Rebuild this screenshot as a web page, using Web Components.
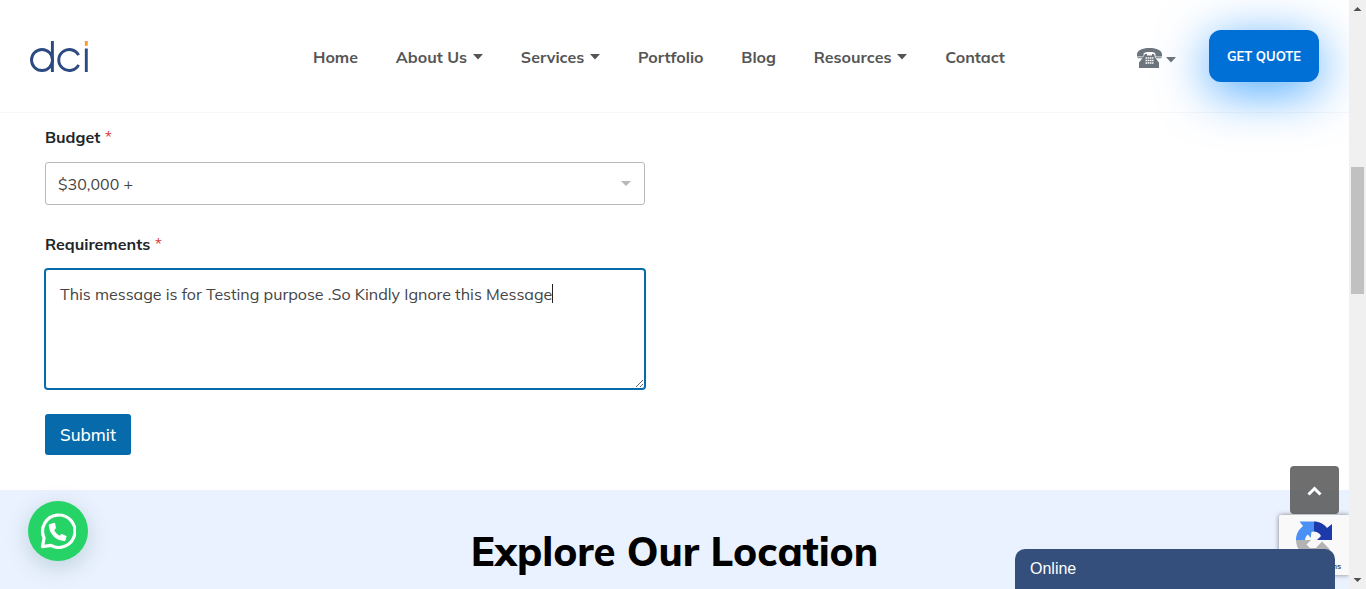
<!DOCTYPE html>
<html lang="en">
<head>
<meta charset="utf-8">
<title>DCI – Get a Quote</title>
<style>
  html, body { margin: 0; height: 100%; }
  body { overflow: hidden; background: #fff; color: #212529; font: 400 16px/24px Mulish, "Open Sans", sans-serif; }
</style>
</head>
<body>
<page-shell>
  <site-header slot="header">
    <site-logo slot="logo"></site-logo>
    <nav-link>Home</nav-link>
    <nav-link menu>About Us</nav-link>
    <nav-link menu>Services</nav-link>
    <nav-link>Portfolio</nav-link>
    <nav-link>Blog</nav-link>
    <nav-link menu>Resources</nav-link>
    <nav-link>Contact</nav-link>
    <phone-menu slot="actions"></phone-menu>
    <quote-button slot="actions">GET QUOTE</quote-button>
  </site-header>
  <quote-form></quote-form>
  <location-section>Explore Our Location</location-section>
  <whatsapp-button slot="floating"></whatsapp-button>
  <scroll-top slot="floating"></scroll-top>
  <recaptcha-badge slot="floating"></recaptcha-badge>
  <chat-bar slot="floating">Online</chat-bar>
  <scroll-track slot="scrollbar"></scroll-track>
</page-shell>

<script>
const define = (name, html) => {
  const template = document.createElement('template');
  template.innerHTML = html;
  customElements.define(name, class extends HTMLElement {
    constructor() {
      super();
      this.attachShadow({ mode: 'open' }).append(template.content.cloneNode(true));
    }
  });
};

define('page-shell', `
<style>
  :host { display: grid; grid-template-columns: minmax(0, 1fr) 17px; height: 100vh; overflow: hidden; }
  .view { position: relative; display: flex; flex-direction: column; min-height: 0; overflow: hidden; }
  main { flex: 1 0 auto; display: flex; flex-direction: column; }
</style>
<div class="view">
  <slot name="header"></slot>
  <main><slot></slot></main>
  <slot name="floating"></slot>
</div>
<slot name="scrollbar"></slot>`);

define('site-header', `
<style>
  :host { display: block; flex: none; position: relative; z-index: 1; }
  header { display: grid; grid-template-columns: 283px minmax(0, 692px) 1fr; align-items: center;
    padding: 30px; border-bottom: 1px solid #f8f8f8; }
  nav { display: flex; justify-content: space-between; padding-top: 2px; }
  .logo { padding-top: 2px; }
  .actions { display: flex; justify-content: flex-end; align-items: center; gap: 33px; }
</style>
<header>
  <div class="logo"><slot name="logo"></slot></div>
  <nav aria-label="Main"><slot></slot></nav>
  <div class="actions"><slot name="actions"></slot></div>
</header>`);

define('site-logo', `
<style>
  :host { display: block; }
  a { display: block; width: 60px; }
  svg { display: block; }
</style>
<a href="#" aria-label="DCI home">
  <svg width="60" height="34" viewBox="0 0 60 34" fill="none" stroke="#2b4a80" stroke-width="2.900">
    <circle cx="12" cy="20" r="10.500"/>
    <path d="M22.400 1v31"/>
    <path d="M48.600 15.200A10.500 10.500 0 1 0 48.600 24.800"/>
    <path d="M56.300 8.500V32"/>
    <path d="M56.300 1v4.800" stroke="#fb9a2c"/>
  </svg>
</a>`);

define('nav-link', `
<style>
  :host { display: block; }
  a { display: flex; align-items: center; gap: 6px; color: #555; font-weight: 700; text-decoration: none; white-space: nowrap; }
  svg { display: none; margin-bottom: 1px; }
  :host([menu]) svg { display: block; }
</style>
<a href="#"><slot></slot><svg width="10" height="6" viewBox="0 0 10 6"><path d="M0 0h10L5 5.500z" fill="#555"/></svg></a>`);

define('phone-menu', `
<style>
  :host { display: block; }
  button { display: flex; align-items: center; gap: 4px; margin: 0; padding: 4px 0 0; border: 0; background: none; color: #6c757d; }
  .caret { margin-top: 4px; }
</style>
<button type="button" aria-label="Call us" aria-haspopup="true">
  <svg width="25" height="21" viewBox="0 0 25 21" fill="currentColor">
    <path d="M12.500 0C5 0 .5 2.500 0 6v2.500h6.500V6.300C6.500 4.500 9 4 12.500 4s6 .5 6 2.300v2.200H25V6C24.500 2.500 20 0 12.500 0z"/>
    <path d="M0 9.300h6.300v.9H1z M18.700 9.300H25l-1 .9h-5.300z"/>
    <path d="M8 6h2v1.500h5V6h2l1 3.500 4 5V20H2v-5.500l4-5z"/>
    <path d="M8.500 10h8M8.500 12.500h8M8.500 15h8" stroke="#fff" stroke-width="1.400" stroke-dasharray="1.600 .6"/>
  </svg>
  <svg class="caret" width="10" height="6" viewBox="0 0 10 6" fill="currentColor"><path d="M0 0h10L5 5.500z"/></svg>
</button>`);

define('quote-button', `
<style>
  :host { display: block; }
  button { display: block; box-sizing: border-box; width: 110px; height: 52px; margin: 0; padding: 0; border: 0; border-radius: 12px;
    background: #006fd6; color: #fff; font: 700 13px/20px Mulish, "Open Sans", sans-serif; white-space: nowrap;
    box-shadow: 0 10px 50px #0084ffb8; }
</style>
<button type="button"><slot></slot></button>`);

define('quote-form', `
<style>
  :host { display: block; }
  form { display: flex; flex-direction: column; align-items: flex-start; padding: 12px 45px 35px; }
  .field { width: 100%; max-width: 600px; display: flex; flex-direction: column; margin-bottom: 27px; }
  .field.last { margin-bottom: 25px; }
  label { font-weight: 700; margin-bottom: 13px; }
  .required { color: #d63637; font-weight: 400; }
  .select { display: grid; align-items: center; }
  .select > * { grid-area: 1 / 1; }
  .select svg { justify-self: end; margin-right: 14px; pointer-events: none; }
  select, textarea { box-sizing: border-box; width: 100%; margin: 0; border: 1px solid #b8b8b8; border-radius: 3px;
    background: #fff; color: #444; font: inherit; outline: none; }
  select { appearance: none; height: 43px; padding: 0 12px; }
  .message { position: relative; }
  textarea { display: block; height: 120px; padding: 12px 14px; border-color: #066aab; box-shadow: 0 0 0 1px #066aab; resize: vertical; }
  .caret { position: absolute; left: 507px; top: 15px; width: 1px; height: 19px; background: #222; }
  button { height: 41px; margin: 0; padding: 0 15px; border: 0; border-radius: 3px; background: #066aab; color: #fff;
    font: 500 17px/24px Mulish, "Open Sans", sans-serif; }
</style>
<form>
  <div class="field">
    <label for="budget">Budget <span class="required">*</span></label>
    <div class="select">
      <select id="budget" required><option>$30,000 +</option></select>
      <svg width="10" height="5" viewBox="0 0 10 5"><path d="M0 0h10L5 5z" fill="#b8b8b8"/></svg>
    </div>
  </div>
  <div class="field last">
    <label for="requirements">Requirements <span class="required">*</span></label>
    <div class="message">
      <textarea id="requirements" required spellcheck="false">This message is for Testing purpose .So Kindly Ignore this Message</textarea>
      <span class="caret"></span>
    </div>
  </div>
  <button type="submit">Submit</button>
</form>`);

define('location-section', `
<style>
  :host { display: block; flex: 1 0 auto; background: #ebf2ff; }
  h2 { margin: 0; padding: 37px 30px; color: #000; font-weight: 800; font-size: 40px; line-height: 48px; text-align: center; }
</style>
<section><h2><slot></slot></h2></section>`);

define('whatsapp-button', `
<style>
  :host { position: absolute; left: 28px; bottom: 28px; z-index: 2; }
  button { display: grid; place-items: center; width: 60px; height: 60px; margin: 0; padding: 0; border: 0; border-radius: 50%;
    background: #25d366; box-shadow: 0 6px 24px #07525133; }
</style>
<button type="button" aria-label="Chat on WhatsApp">
  <svg width="36" height="36" viewBox="0 0 36 36">
    <path d="M4.100 25A16.200 16.200 0 1 1 11 32.400L2.500 33.600z" fill="none" stroke="#fff" stroke-width="3.200" stroke-linejoin="round"/>
    <path d="M9.500 11.200l4.600-1.400c.6 0 .9.300 1.100.8l.7 4.200c0 .6-.2 1-1.700 2.100 1.300 2.800 3.200 4.600 5.700 5.800 1.200-1.600 1.800-1.700 2.400-1.500l3.600 1.600c.6.300.7.700.6 1.200l-.9 3c-.2.600-.6.900-1.200.9C16 27.900 9 20.500 8.800 12.200c0-.5.200-.9.700-1z" fill="#fff"/>
  </svg>
</button>`);

define('scroll-top', `
<style>
  :host { position: absolute; right: 10px; bottom: 75px; z-index: 3; }
  button { display: grid; place-items: center; width: 49px; height: 48px; margin: 0; padding: 2px 0 0; border: 0; border-radius: 4px; background: #555555d9; }
</style>
<button type="button" aria-label="Back to top">
  <svg width="15" height="10" viewBox="0 0 15 10"><path d="M1.500 8.500l6-6 6 6" fill="none" stroke="#fff" stroke-width="3"/></svg>
</button>`);

define('recaptcha-badge', `
<style>
  :host { position: absolute; right: 0; bottom: 14px; z-index: 2; display: flex; flex-direction: column; align-items: center; box-sizing: border-box;
    width: 70px; height: 60px; padding: 4px 0 3px; border-radius: 2px 0 0 2px; background: #f9f9f9; box-shadow: 0 0 5px gray; }
  a { color: #222; font: 400 8px/10px Roboto, sans-serif; text-decoration: none; white-space: nowrap; margin-top: auto; }
</style>
<svg width="38" height="38" viewBox="0 0 38 38" role="img" aria-label="reCAPTCHA">
  <path d="M19 2.500H4.500L8 7C3.500 10.500 1 15.500 1 21h9c.3-2.500 1.300-4.500 3-5.500l2.500 3.500 1-6 2.500-.5z" fill="#4a90f5"/>
  <path d="M19 2.500c5.500 0 10 2.500 13 6.500l5-4v16H22l4-4c-1-2.500-3.500-4.300-7-4.500z" fill="#1c3aa9"/>
  <path d="M1 21h15l-4.500 4.500L15 29h6l6-6.500 8 8C31 35 26 38 19 38 9 38 1 31 1 21z" fill="#b3b3b3"/>
</svg>
<a href="#">Privacy - Terms</a>`);

define('chat-bar', `
<style>
  :host { position: absolute; right: 14px; bottom: 0; z-index: 4; width: 320px; }
  button { display: block; box-sizing: border-box; width: 100%; height: 40px; margin: 0; padding: 0 15px; border: 0; border-radius: 10px 10px 0 0;
    background: #344f7c; color: #fff; text-align: left; font: 400 16px/24px "Liberation Sans", Arial, sans-serif; }
</style>
<button type="button"><slot></slot></button>`);

define('scroll-track', `
<style>
  :host { display: flex; flex-direction: column; align-items: center; background: #f0f0f0; }
  svg { flex: none; display: block; }
  .track { flex: 1; width: 13px; display: grid; grid-template-rows: 150fr 127fr 278fr; }
  .thumb { grid-row: 2; background: #c1c1c1; }
</style>
<svg width="17" height="17" viewBox="0 0 17 17"><path d="M4.500 11h8l-4-4z" fill="#505050"/></svg>
<div class="track"><div class="thumb"></div></div>
<svg width="17" height="17" viewBox="0 0 17 17"><path d="M4.500 6h8l-4 4z" fill="#505050"/></svg>`);
</script>
</body>
</html>
